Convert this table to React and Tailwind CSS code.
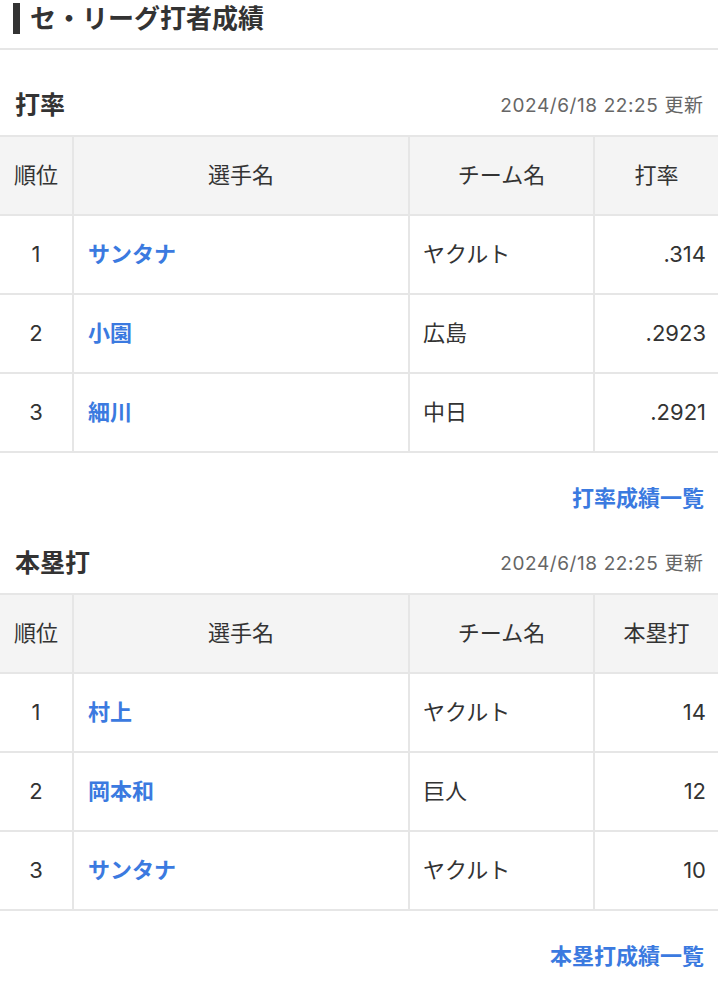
import React from 'react';

const battingAvg = [
  { rank: 1, name: 'サンタナ', team: 'ヤクルト', value: '.314' },
  { rank: 2, name: '小園', team: '広島', value: '.2923' },
  { rank: 3, name: '細川', team: '中日', value: '.2921' },
];

const homeRuns = [
  { rank: 1, name: '村上', team: 'ヤクルト', value: '14' },
  { rank: 2, name: '岡本和', team: '巨人', value: '12' },
  { rank: 3, name: 'サンタナ', team: 'ヤクルト', value: '10' },
];

const StatTable = ({ title, label, rows, linkText }) => {
  return (
    <section>
      <div className="flex items-center justify-between px-[15px] h-[58px]">
        <h3 className="text-[25px] font-bold text-[#333]">{title}</h3>
        <span className="text-[19px] tracking-[0.6px] text-[#666] mr-[-0.6px]">2024/6/18 22:25 更新</span>
      </div>
      <table className="w-full border-collapse table-fixed text-[22px] text-[#333]">
        <colgroup>
          <col className="w-[73px]" />
          <col className="w-[336px]" />
          <col className="w-[185px]" />
          <col className="w-[124px]" />
        </colgroup>
        <thead>
          <tr className="bg-[#f4f4f4] h-[79px] border-y-2 border-[#e6e6e6]">
            <th className="font-normal text-center">順位</th>
            <th className="font-normal text-center border-l-2 border-[#e6e6e6]">選手名</th>
            <th className="font-normal text-center border-l-2 border-[#e6e6e6]">チーム名</th>
            <th className="font-normal text-center border-l-2 border-[#e6e6e6]">{label}</th>
          </tr>
        </thead>
        <tbody>
          {rows.map((r) => (
            <tr key={r.rank} className="h-[79px] border-b-2 border-[#e6e6e6]">
              <td className="text-center">{r.rank}</td>
              <td className="border-l-2 border-[#e6e6e6] px-[14px] font-bold text-[#3b7ae0]">{r.name}</td>
              <td className="border-l-2 border-[#e6e6e6] px-[13px]">{r.team}</td>
              <td className="border-l-2 border-[#e6e6e6] px-[12px] text-right">{r.value}</td>
            </tr>
          ))}
        </tbody>
      </table>
      <div className="flex justify-end px-[14px] h-[82px] pt-[29px]">
        <a className="text-[22px] leading-[32px] font-bold text-[#3b7ae0]">{linkText}</a>
      </div>
    </section>
  );
};

export default function App() {
  return (
    <div
      className="bg-white w-[718px] min-h-[1000px]"
      style={{ fontFamily: 'Inter, "Noto Sans CJK JP", "Noto Sans", sans-serif' }}
    >
      <div className="h-[50px] border-b-2 border-[#e6e6e6] flex items-start pt-[3px] pl-[13px] mb-[27px]">
        <span className="w-[7px] h-[31px] bg-[#333] mr-[10px]" />
        <h2 className="text-[26px] leading-[31px] font-bold text-[#333]">セ・リーグ打者成績</h2>
      </div>
      <StatTable title="打率" label="打率" rows={battingAvg} linkText="打率成績一覧" />
      <StatTable title="本塁打" label="本塁打" rows={homeRuns} linkText="本塁打成績一覧" />
    </div>
  );
}
